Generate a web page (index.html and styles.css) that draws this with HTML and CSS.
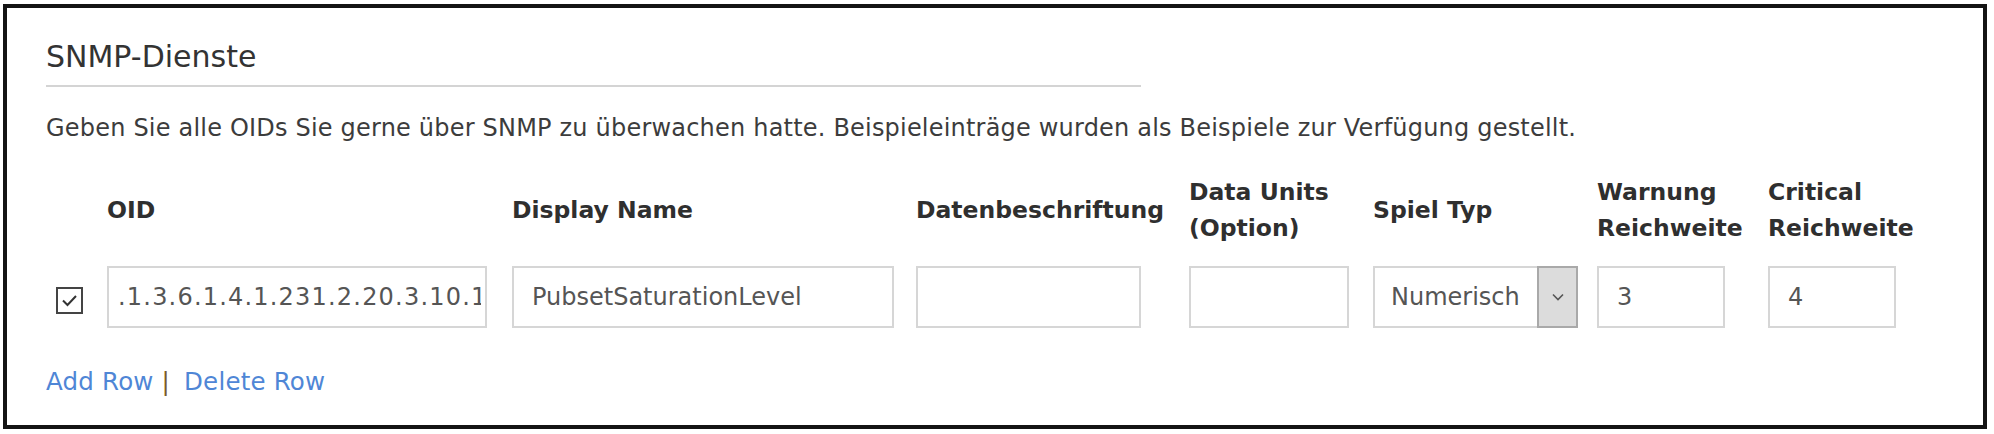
FILE: index.html
```html
<!DOCTYPE html>
<html lang="de">
<head>
<meta charset="utf-8">
<title>SNMP-Dienste</title>
<link rel="stylesheet" href="styles.css">
</head>
<body>
<div class="frame">
  <h2 class="title">SNMP-Dienste</h2>
  <hr class="rule">
  <p class="desc">Geben Sie alle OIDs Sie gerne über SNMP zu überwachen hatte. Beispieleinträge wurden als Beispiele zur Verfügung gestellt.</p>
  <div class="grid">
    <div class="hd"></div>
    <div class="hd">OID</div>
    <div class="hd">Display Name</div>
    <div class="hd">Datenbeschriftung</div>
    <div class="hd">Data Units<br>(Option)</div>
    <div class="hd">Spiel Typ</div>
    <div class="hd">Warnung<br>Reichweite</div>
    <div class="hd">Critical<br>Reichweite</div>

    <div class="cell"><span class="check"><svg viewBox="0 0 23 23" width="23" height="23"><polyline points="5,11.5 9.5,16 18,7" fill="none" stroke="#333" stroke-width="2"/></svg></span></div>
    <div class="cell"><input class="field w-oid" type="text" value=".1.3.6.1.4.1.231.2.20.3.10.1.1"></div>
    <div class="cell"><input class="field w-name" type="text" value="PubsetSaturationLevel"></div>
    <div class="cell"><input class="field w-label" type="text" value=""></div>
    <div class="cell"><input class="field w-units" type="text" value=""></div>
    <div class="cell">
      <div class="select"><span class="select-text">Numerisch</span><span class="select-btn"><svg viewBox="0 0 14 10" width="14" height="10"><polyline points="2,2.5 7,7.5 12,2.5" fill="none" stroke="#555" stroke-width="1.6"/></svg></span></div>
    </div>
    <div class="cell"><input class="field w-num" type="text" value="3"></div>
    <div class="cell"><input class="field w-num" type="text" value="4"></div>
  </div>
  <div class="links"><a class="link" href="#">Add Row</a> <span class="sep">|</span> <a class="link" href="#">Delete Row</a></div>
</div>
</body>
</html>
```
FILE: styles.css
```css
html, body {
  margin: 0;
  padding: 0;
  background: #ffffff;
}

.frame {
  margin: 4px 0 0 3px;
  width: 1984px;
  height: 425px;
  box-sizing: border-box;
  border: 4px solid #141414;
  padding: 31px 0 0 39px;
  font-family: "DejaVu Sans", sans-serif;
  color: #3c3c3c;
}

.title {
  margin: 0;
  font-weight: normal;
  font-size: 30px;
  line-height: 36px;
  color: #333333;
}

.rule {
  margin: 10px 0 0;
  border: 0;
  border-top: 2px solid #d4d4d4;
  width: 1095px;
  height: 0;
}

.desc {
  margin: 26px 0 0;
  font-size: 24px;
  letter-spacing: 0.2px;
  line-height: 30px;
}

.grid {
  margin: 31px 0 0 10px;
  display: grid;
  grid-template-columns: 51px 405px 404px 273px 184px 224px 171px auto;
  grid-template-rows: 72px 62px;
  row-gap: 20px;
  align-items: center;
}

.hd {
  font-weight: bold;
  font-size: 23.5px;
  line-height: 36px;
  color: #2f2f2f;
}

.cell {
  display: flex;
  align-items: center;
}

.check {
  display: block;
  width: 27px;
  height: 27px;
  box-sizing: border-box;
  border: 2px solid #444444;
  margin-top: 6px;
}

.check svg {
  display: block;
}

.field {
  height: 62px;
  box-sizing: border-box;
  border: 2px solid #d6d6d6;
  padding: 0 4px 0 18px;
  margin: 0;
  font-family: "DejaVu Sans", sans-serif;
  font-size: 24px;
  color: #555555;
  background: #ffffff;
  outline: none;
}

.w-oid {
  width: 380px;
  padding-left: 9px;
  letter-spacing: 1.2px;
}
.w-name { width: 382px; }
.w-label { width: 225px; }
.w-units { width: 160px; }
.w-num { width: 128px; }

.select {
  display: flex;
  align-items: stretch;
  width: 205px;
  height: 62px;
  box-sizing: border-box;
  border: 2px solid #d6d6d6;
  font-size: 24px;
  color: #555555;
}

.select-text {
  flex: 1;
  display: flex;
  align-items: center;
  padding-left: 16px;
}

.select-btn {
  width: 37px;
  display: flex;
  align-items: center;
  justify-content: center;
  background: #dcdcdc;
  border: 2px solid #a9a9a9;
  margin: -2px -2px -2px 0;
}

.links {
  margin-top: 39px;
  font-size: 24.5px;
  letter-spacing: 0.2px;
  line-height: 30px;
}

.link {
  color: #4f86d6;
  text-decoration: none;
}

.sep {
  color: #7a5a2a;
  margin-right: 6px;
}
```
